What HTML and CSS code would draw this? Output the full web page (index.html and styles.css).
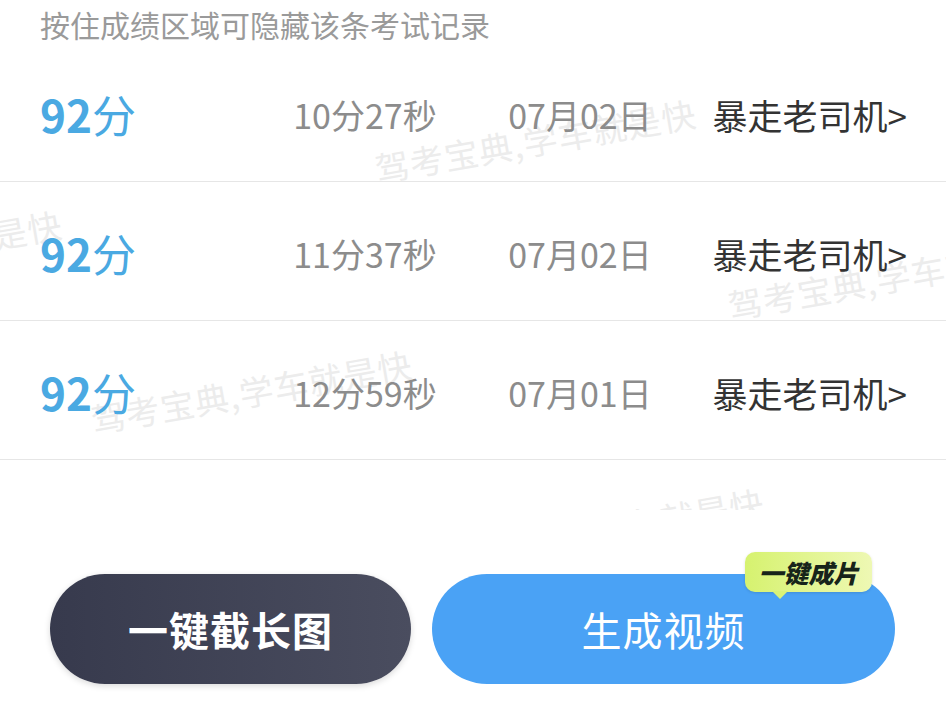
FILE: index.html
```html
<!DOCTYPE html>
<html lang="zh-CN">
<head>
  <meta charset="UTF-8">
  <title>考试记录</title>
  <link rel="stylesheet" href="styles.css">
</head>
<body>

  <div class="tip">按住成绩区域可隐藏该条考试记录</div>

  <div class="lista">
    <!-- marca d'agua -->
    <div class="marcas">
      <span class="marca" style="left: -259px; top: 217px;">驾考宝典,学车就是快</span>
      <span class="marca" style="left: 375px; top: 106px;">驾考宝典,学车就是快</span>
      <span class="marca" style="left: 728px; top: 243px;">驾考宝典,学车就是快</span>
      <span class="marca" style="left: 91px; top: 357px;">驾考宝典,学车就是快</span>
      <span class="marca" style="left: 443px; top: 495px;">驾考宝典,学车就是快</span>
    </div>

    <div class="linha">
      <div class="nota">92<span class="unidade">分</span></div>
      <div class="tempo">10分27秒</div>
      <div class="data">07月02日</div>
      <div class="nome">暴走老司机&gt;</div>
    </div>
    <div class="linha">
      <div class="nota">92<span class="unidade">分</span></div>
      <div class="tempo">11分37秒</div>
      <div class="data">07月02日</div>
      <div class="nome">暴走老司机&gt;</div>
    </div>
    <div class="linha">
      <div class="nota">92<span class="unidade">分</span></div>
      <div class="tempo">12分59秒</div>
      <div class="data">07月01日</div>
      <div class="nome">暴走老司机&gt;</div>
    </div>
  </div>

  <div class="rodape">
    <button class="botao botao-escuro">一键截长图</button>
    <button class="botao botao-azul">
      生成视频
      <span class="selo">一键成片</span>
    </button>
  </div>

</body>
</html>
```

FILE: styles.css
```css
body {
  margin: 0;
  width: 946px;
  height: 720px;
  overflow: hidden;
  background-color: #fff;
  font-family: "Noto Sans CJK SC", "Noto Sans", sans-serif;
}

.tip {
  height: 38px;
  padding: 5px 0 0 40px;
  line-height: 38px;
  font-size: 30px;
  color: #9a9a9a;
}

.lista {
  position: relative;
  height: 467px;
  overflow: hidden;
}

.marcas {
  position: absolute;
  left: 0;
  top: 0;
  width: 100%;
  height: 100%;
  pointer-events: none;
  z-index: 0;
}

.marca {
  position: absolute;
  font-size: 34px;
  line-height: 34px;
  white-space: nowrap;
  letter-spacing: 1px;
  color: #ececec;
  transform: rotate(-10deg);
  transform-origin: 17px 50%;
}

.linha {
  position: relative;
  z-index: 1;
  display: grid;
  grid-template-columns: 200px 250px 180px 1fr;
  align-items: center;
  height: 134px;
  padding: 4px 39px 0 40px;
  border-bottom: 1px solid #e6e6e6;
}

.nota {
  font-size: 44px;
  font-weight: 700;
  color: #4aa9e2;
}

.unidade {
  font-weight: 400;
}

.tempo,
.data {
  text-align: center;
  font-size: 34px;
  color: #8c8c8c;
}

.nome {
  text-align: right;
  font-size: 35px;
  color: #333;
}

.rodape {
  display: flex;
  gap: 21px;
  padding: 64px 51px 0 50px;
}

.botao {
  height: 110px;
  border: none;
  border-radius: 55px;
  font-family: "Noto Sans CJK SC", "Noto Sans", sans-serif;
  font-size: 40px;
  color: #fff;
  cursor: pointer;
}

.botao-escuro {
  width: 361px;
  font-weight: 700;
  letter-spacing: 1px;
  background: linear-gradient(90deg, #373a4d, #4a4d5f);
  box-shadow: 0 2px 6px rgba(0, 0, 0, 0.15);
}

.botao-azul {
  position: relative;
  flex: 1;
  letter-spacing: 1px;
  background-color: #4aa2f5;
}

.selo {
  position: absolute;
  right: 23px;
  top: -22px;
  width: 127px;
  height: 40px;
  line-height: 40px;
  border-radius: 10px;
  background: linear-gradient(90deg, #d6f26f, #eef8b4);
  box-shadow: 0 1px 3px rgba(0, 0, 0, 0.12);
  font-size: 25px;
  font-weight: 900;
  font-style: italic;
  letter-spacing: 0;
  color: #17241a;
  text-align: center;
}

.selo::after {
  content: "";
  position: absolute;
  left: 27px;
  bottom: -7px;
  border-left: 8px solid transparent;
  border-right: 8px solid transparent;
  border-top: 8px solid #d9f376;
}
```
